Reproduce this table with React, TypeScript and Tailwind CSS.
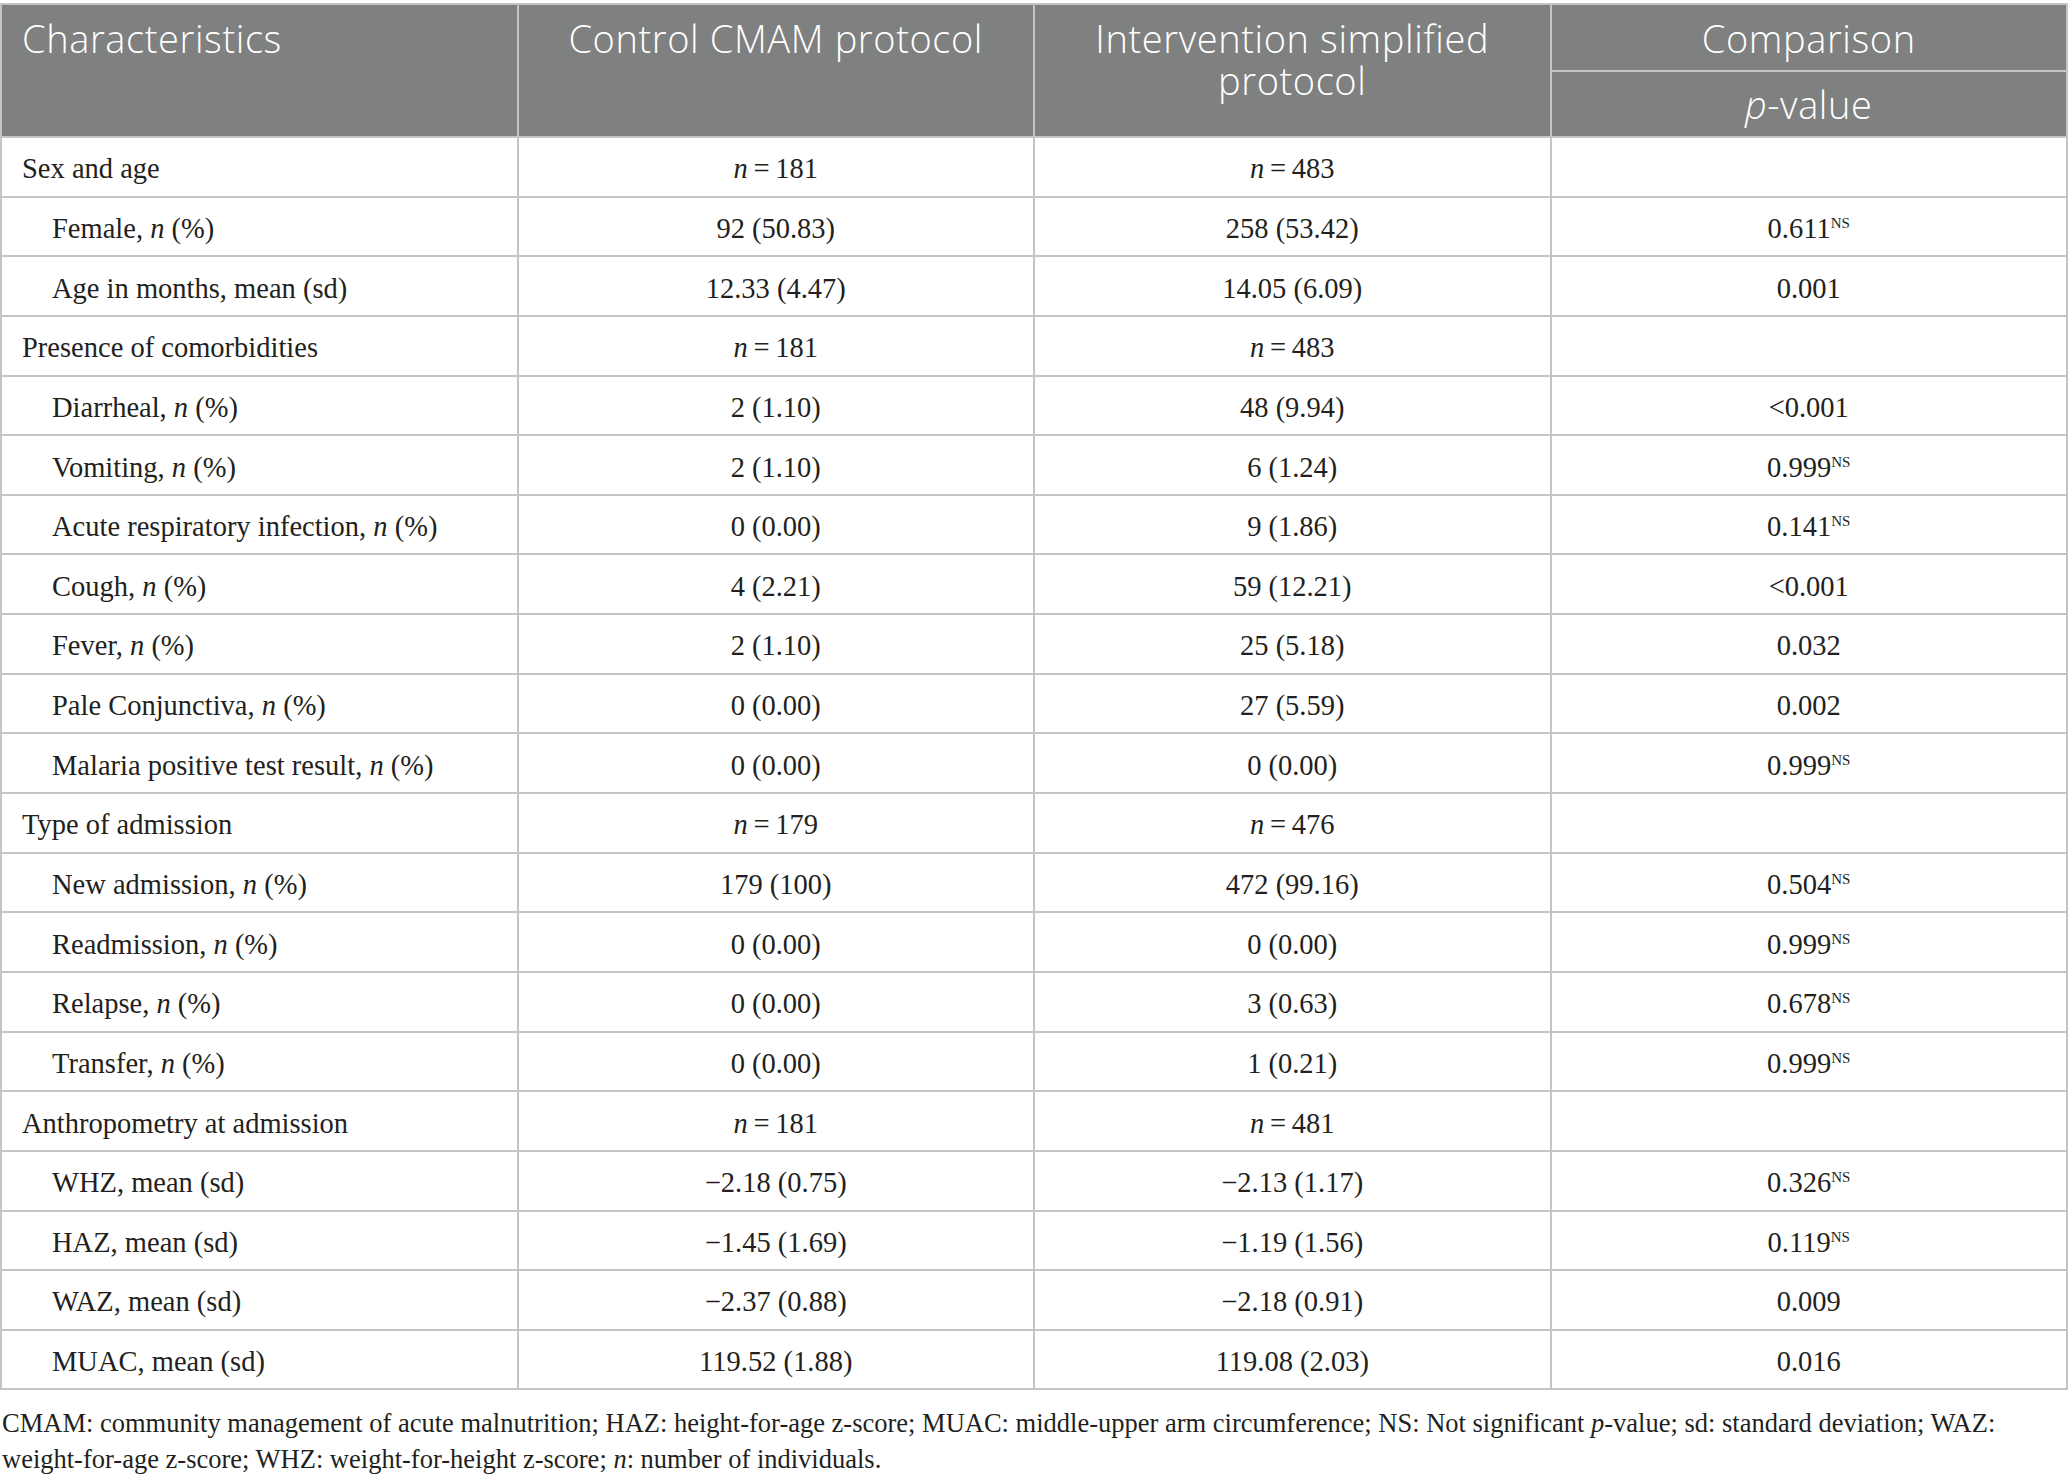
import React from "react";

type Row = {
  label: React.ReactNode;
  indent: boolean;
  c: React.ReactNode;
  i: React.ReactNode;
  p: React.ReactNode;
};

const N = ({ v }: { v: string }) => (
  <span>
    <i>n</i>
    {"\u2009=\u2009" + v}
  </span>
);

const L = ({ t, tail }: { t: string; tail: string }) => (
  <span>
    {t}
    <i>n</i>
    {tail}
  </span>
);

const NS = ({ v }: { v: string }) => (
  <span>
    {v}
    <sup className="text-[15px] -top-[10px]">NS</sup>
  </span>
);

const rows: Row[] = [
  { label: "Sex and age", indent: false, c: <N v="181" />, i: <N v="483" />, p: "" },
  { label: <L t="Female, " tail=" (%)" />, indent: true, c: "92 (50.83)", i: "258 (53.42)", p: <NS v="0.611" /> },
  { label: "Age in months, mean (sd)", indent: true, c: "12.33 (4.47)", i: "14.05 (6.09)", p: "0.001" },
  { label: "Presence of comorbidities", indent: false, c: <N v="181" />, i: <N v="483" />, p: "" },
  { label: <L t="Diarrheal, " tail=" (%)" />, indent: true, c: "2 (1.10)", i: "48 (9.94)", p: "<0.001" },
  { label: <L t="Vomiting, " tail=" (%)" />, indent: true, c: "2 (1.10)", i: "6 (1.24)", p: <NS v="0.999" /> },
  { label: <L t="Acute respiratory infection, " tail=" (%)" />, indent: true, c: "0 (0.00)", i: "9 (1.86)", p: <NS v="0.141" /> },
  { label: <L t="Cough, " tail=" (%)" />, indent: true, c: "4 (2.21)", i: "59 (12.21)", p: "<0.001" },
  { label: <L t="Fever, " tail=" (%)" />, indent: true, c: "2 (1.10)", i: "25 (5.18)", p: "0.032" },
  { label: <L t="Pale Conjunctiva, " tail=" (%)" />, indent: true, c: "0 (0.00)", i: "27 (5.59)", p: "0.002" },
  { label: <L t="Malaria positive test result, " tail=" (%)" />, indent: true, c: "0 (0.00)", i: "0 (0.00)", p: <NS v="0.999" /> },
  { label: "Type of admission", indent: false, c: <N v="179" />, i: <N v="476" />, p: "" },
  { label: <L t="New admission, " tail=" (%)" />, indent: true, c: "179 (100)", i: "472 (99.16)", p: <NS v="0.504" /> },
  { label: <L t="Readmission, " tail=" (%)" />, indent: true, c: "0 (0.00)", i: "0 (0.00)", p: <NS v="0.999" /> },
  { label: <L t="Relapse, " tail=" (%)" />, indent: true, c: "0 (0.00)", i: "3 (0.63)", p: <NS v="0.678" /> },
  { label: <L t="Transfer, " tail=" (%)" />, indent: true, c: "0 (0.00)", i: "1 (0.21)", p: <NS v="0.999" /> },
  { label: "Anthropometry at admission", indent: false, c: <N v="181" />, i: <N v="481" />, p: "" },
  { label: "WHZ, mean (sd)", indent: true, c: "\u22122.18 (0.75)", i: "\u22122.13 (1.17)", p: <NS v="0.326" /> },
  { label: "HAZ, mean (sd)", indent: true, c: "\u22121.45 (1.69)", i: "\u22121.19 (1.56)", p: <NS v="0.119" /> },
  { label: "WAZ, mean (sd)", indent: true, c: "\u22122.37 (0.88)", i: "\u22122.18 (0.91)", p: "0.009" },
  { label: "MUAC, mean (sd)", indent: true, c: "119.52 (1.88)", i: "119.08 (2.03)", p: "0.016" },
];

export default function App() {
  const th =
    "border-2 border-[#c4c4c4] align-top pt-[12px] font-[350] text-white text-[38px] leading-[42px] tracking-[0.6px]";
  const td = "border-2 border-[#c4c4c4] text-center pt-[5px]";
  return (
    <div className="w-[2068px] bg-white pt-[3px] text-[#231f20] [font-family:'Liberation_Serif','Times_New_Roman',serif]">
      <table className="w-full table-fixed border-collapse">
        <colgroup>
          <col className="w-1/4" />
          <col className="w-1/4" />
          <col className="w-1/4" />
          <col className="w-1/4" />
        </colgroup>
        <thead className="bg-[#7f8080] [font-family:'Open_Sans','Noto_Sans',sans-serif]">
          <tr className="h-[67px]">
            <th rowSpan={2} className={th + " text-left pl-[20px]"}>
              Characteristics
            </th>
            <th rowSpan={2} className={th + " text-center"}>
              Control CMAM protocol
            </th>
            <th rowSpan={2} className={th + " text-center px-[40px]"}>
              Intervention simplified protocol
            </th>
            <th className={th + " text-center"}>Comparison</th>
          </tr>
          <tr className="h-[66px]">
            <th className="border-2 border-[#c4c4c4] align-middle font-[350] text-white text-[38px] leading-[42px] tracking-[0.6px] text-center">
              <i>p</i>-value
            </th>
          </tr>
        </thead>
        <tbody className="text-[28.5px] leading-[32px]">
          {rows.map((r, idx) => (
            <tr key={idx} className="h-[59.65px]">
              <td
                className={
                  "border-2 border-[#c4c4c4] text-left pt-[5px] " +
                  (r.indent ? "pl-[50px]" : "pl-[20px]")
                }
              >
                {r.label}
              </td>
              <td className={td}>{r.c}</td>
              <td className={td}>{r.i}</td>
              <td className={td}>{r.p}</td>
            </tr>
          ))}
        </tbody>
      </table>
      <div className="mt-[15px] pl-[2px] text-[26.5px] leading-[36px]">
        <div className="whitespace-nowrap">
          CMAM: community management of acute malnutrition; HAZ: height-for-age z-score; MUAC: middle-upper arm
          circumference; NS: Not significant <i>p</i>-value; sd: standard deviation; WAZ:
        </div>
        <div className="whitespace-nowrap">
          weight-for-age z-score; WHZ: weight-for-height z-score; <i>n</i>: number of individuals.
        </div>
      </div>
    </div>
  );
}
